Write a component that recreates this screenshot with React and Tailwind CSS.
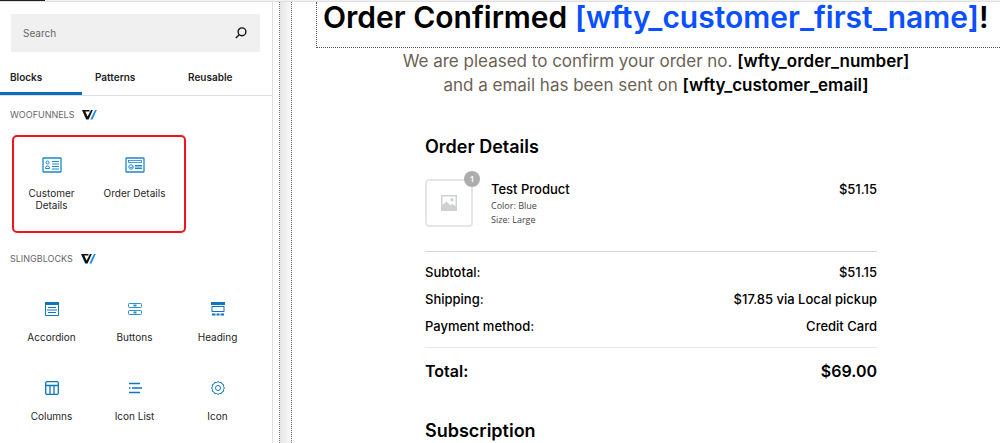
const woofunnelsBlocks = [
  { name: 'Customer Details', icon: CustomerIcon },
  { name: 'Order Details', icon: OrderIcon },
];

const slingBlocks = [
  { name: 'Accordion', icon: AccordionIcon },
  { name: 'Buttons', icon: ButtonsIcon },
  { name: 'Heading', icon: HeadingIcon },
  { name: 'Columns', icon: ColumnsIcon },
  { name: 'Icon List', icon: IconListIcon },
  { name: 'Icon', icon: GearIcon },
];

const totals = [
  { label: 'Subtotal:', value: '$51.15' },
  { label: 'Shipping:', value: '$17.85 via Local pickup' },
  { label: 'Payment method:', value: 'Credit Card' },
];

function CustomerIcon() {
  return (
    <svg width="20" height="16" viewBox="0 0 20 16" fill="none" stroke="#1c87c9">
      <rect x="1" y="1" width="18" height="14" rx="0.5" strokeWidth="1.3" />
      <circle cx="5.500" cy="5.500" r="1.500" />
      <path d="M3.500 11.500v-1q0-1.500 2-1.500t2 1.500v1z" />
      <path d="M10 4.500h7M10 7h7M10 9.500h7M10 12h7" />
    </svg>
  );
}

function OrderIcon() {
  return (
    <svg width="20" height="16" viewBox="0 0 20 16" fill="none" stroke="#1c87c9">
      <rect x="1" y="1" width="18" height="14" rx="0.5" strokeWidth="1.3" />
      <rect x="3.500" y="3.500" width="13" height="2" strokeWidth="0.8" />
      <circle cx="6" cy="10" r="2.200" />
      <path d="M5 10l1 1 2-2" strokeWidth="0.8" />
      <path d="M10 8.500h7M10 10h7M10 11.500h7" />
    </svg>
  );
}

function AccordionIcon() {
  return (
    <svg width="14" height="14" viewBox="0 0 14 14" fill="none" stroke="#0d76bd">
      <path d="M.5 1.500v12h13v-12" />
      <path d="M0 1.500h14" strokeWidth="3" />
      <path d="M3 5.500h8M2 8h10M3 10.500h8" strokeWidth="1.2" />
    </svg>
  );
}

function ButtonsIcon() {
  return (
    <svg width="14" height="14" viewBox="0 0 14 14" fill="none" stroke="#2e8fce">
      <rect x="0.5" y="1.500" width="13" height="4" rx="0.8" />
      <rect x="0.5" y="8.500" width="13" height="4" rx="0.8" />
      <path d="M5.500 3.500h3M5.500 10.500h3" strokeWidth="1.800" />
    </svg>
  );
}

function HeadingIcon() {
  return (
    <svg width="14" height="14" viewBox="0 0 14 14" fill="none" stroke="#0d76bd">
      <path d="M0 1.500h14" strokeWidth="3" />
      <rect x="1" y="4.500" width="12" height="5" strokeWidth="1" />
      <path d="M1 12.500h3.500M5.500 12.500h3M9.500 12.500h3.500" strokeWidth="2.200" />
    </svg>
  );
}

function ColumnsIcon() {
  return (
    <svg width="14" height="14" viewBox="0 0 14 14" fill="none" stroke="#0d76bd" strokeWidth="1.3">
      <rect x="0.7" y="0.7" width="12.600" height="12.600" rx="1.200" />
      <path d="M1 4.500h12M5 4.500v9M9 4.500v9" />
    </svg>
  );
}

function IconListIcon() {
  return (
    <svg width="14" height="14" viewBox="0 0 14 14" fill="none" stroke="#0d76bd" strokeWidth="1.500">
      <path d="M1 2.500h11M4 7h10M1 11.500h11M1 7h1.500" />
    </svg>
  );
}

function GearIcon() {
  return (
    <svg width="14" height="14" viewBox="0 0 14 14" fill="none" stroke="#0d76bd" strokeLinejoin="round">
      <path d="M5.500 1.500L7 .6l1.500.9 1.800-.2.700 1.700 1.700.7-.2 1.800.9 1.500-.9 1.500.2 1.800-1.700.7-.7 1.700-1.800-.2L7 13.400l-1.500-.9-1.800.2L3 11l-1.700-.7.2-1.800L.6 7l.9-1.500-.2-1.800L3 3l.7-1.700z" />
      <circle cx="7" cy="7" r="2.500" />
    </svg>
  );
}

function BrandMark() {
  return (
    <svg width="15" height="10" viewBox="0 0 15 10" aria-hidden="true">
      <path d="M0 0h7.500v1.500H3.300l2.300 5L9 0h1.800L6.600 9.500H4.200z" fill="#111" />
      <path d="M13 0h1.800l-4.300 9.500H8.300z" fill="#1a8cf0" />
    </svg>
  );
}

function SearchIcon() {
  return (
    <svg width="12" height="12" viewBox="0 0 12 12" fill="none" stroke="#111" strokeWidth="1.400">
      <circle cx="7" cy="4.800" r="3.900" />
      <path d="M4.200 7.800L.8 11" />
    </svg>
  );
}

function BlockButton({ block }) {
  const Icon = block.icon;
  return (
    <button type="button" className="flex h-[79px] flex-col items-center px-2 pt-5 text-[10px] leading-3 text-[#1e1e1e]">
      <span className="flex h-5 items-center">
        <Icon />
      </span>
      <span className="mt-3">{block.name}</span>
    </button>
  );
}

function CategoryTitle({ children }) {
  return (
    <h2 className="flex items-center gap-2 px-[10px] text-[9px] leading-4 text-[#666]">
      {children}
      <BrandMark />
    </h2>
  );
}

function Sidebar() {
  return (
    <aside className="w-[273px] shrink-0 border-r border-[#e0e0e0]">
      <div className="mr-3 ml-[11px] mt-3 flex h-[38px] items-center bg-[#f0f0f0] px-3">
        <input
          type="text"
          aria-label="Search"
          placeholder="Search"
          className="min-w-0 flex-1 bg-transparent text-[10px] outline-none placeholder:text-[#666]"
        />
        <button type="button" aria-label="Submit search" className="mr-px">
          <SearchIcon />
        </button>
      </div>

      <div role="tablist" className="mt-2 flex h-9 border-b border-[#ddd] text-[10px] font-semibold text-[#1e1e1e]">
        <button type="button" role="tab" aria-selected="true" className="w-[82px] border-b-3 border-[#0a6fba] pl-[10px] pt-[2px] text-left">
          Blocks
        </button>
        <button type="button" role="tab" aria-selected="false" className="w-[93px] pb-px pl-[13px] text-left">
          Patterns
        </button>
        <button type="button" role="tab" aria-selected="false" className="pb-px pl-[13px] text-left">
          Reusable
        </button>
      </div>

      <div className="mt-[11px]">
        <CategoryTitle>WOOFUNNELS</CategoryTitle>
      </div>
      <div className="relative mt-3 h-[98px] pr-[13px] pl-[10px]">
        <div className="grid grid-cols-3">
          {woofunnelsBlocks.map((block) => (
            <BlockButton key={block.name} block={block} />
          ))}
        </div>
        <div className="pointer-events-none absolute inset-y-0 left-3 w-[174px] rounded-[5px] border-2 border-[#f5121b]" />
      </div>

      <div className="mt-[18px]">
        <CategoryTitle>SLINGBLOCKS</CategoryTitle>
      </div>
      <div className="mt-3 grid grid-cols-3 pr-[13px] pl-[10px]">
        {slingBlocks.map((block) => (
          <BlockButton key={block.name} block={block} />
        ))}
      </div>
    </aside>
  );
}

function OrderSummary() {
  return (
    <section className="mx-auto mt-[38px] w-full max-w-[452px] text-black">
      <h2 className="text-lg leading-6 font-semibold">Order Details</h2>

      <div className="mt-5 flex items-start border-b border-[#d6d6d6] pb-6">
        <div className="relative flex size-12 shrink-0 items-center justify-center rounded border-2 border-[#e6e6e6]">
          <svg width="16" height="16" viewBox="0 0 16 16" aria-hidden="true">
            <path d="M0 0h16v16H0z" fill="#cfd0d3" />
            <path d="M1.500 1.500h13v10l-3-3-2 2-4-4-4 3.500z" fill="#fff" />
            <circle cx="11" cy="4.800" r="1.700" fill="#cfd0d3" />
          </svg>
          <span className="absolute -top-[10px] -right-[9px] flex size-4 items-center justify-center rounded-full bg-[#adadad] font-['Open_Sans',sans-serif] text-[9px] font-semibold text-white">
            1
          </span>
        </div>
        <div className="ml-[18px] flex-1">
          <p className="text-[13px] leading-5 font-medium">Test Product</p>
          <p className="font-['Open_Sans',sans-serif] text-[9px] leading-[14px] text-[#444]">Color: Blue</p>
          <p className="font-['Open_Sans',sans-serif] text-[9px] leading-[14px] text-[#444]">Size: Large</p>
        </div>
        <p className="text-[13px] leading-5 font-medium">$51.15</p>
      </div>

      <table className="mt-[7px] w-full text-[13px] font-medium">
        <tbody>
          {totals.map((row) => (
            <tr key={row.label} className="h-[27px]">
              <th scope="row" className="text-left font-medium">{row.label}</th>
              <td className="text-right">{row.value}</td>
            </tr>
          ))}
        </tbody>
        <tfoot>
          <tr>
            <td colSpan={2} className="h-[7px] border-b border-[#e8e8e8]" />
          </tr>
          <tr className="h-[48px] text-base font-semibold">
            <th scope="row" className="text-left font-semibold">Total:</th>
            <td className="text-right">$69.00</td>
          </tr>
        </tfoot>
      </table>

      <h2 className="mt-6 text-lg leading-6 font-semibold">Subscription</h2>
    </section>
  );
}

export default function App() {
  return (
    <div className="flex h-screen flex-col overflow-hidden bg-white font-['Inter',sans-serif]">
      <div className="flex h-[2px] shrink-0 border-b border-[#e0e0e0] bg-[#f0f0f0]">
        <div className="w-[45px] bg-[#1e1e1e]" />
      </div>
      <div className="flex min-h-0 flex-1">
        <Sidebar />
        <div className="ml-[6px] w-[13px] shrink-0 border-x border-dotted border-[#777] bg-linear-to-r from-[#e6e6e6] to-[#f8f8f8]" />
        <main className="min-w-0 flex-1 pl-6">
          <div className="h-[46px] border-b border-l border-dotted border-[#555]">
            <h1 className="pl-[6px] text-[30px] leading-[30px] font-semibold whitespace-nowrap text-black">
              Order Confirmed <span className="text-[#0a50ff]">[wfty_customer_first_name]</span>!
            </h1>
          </div>
          <p className="mt-px pr-1 text-center text-[17px] leading-6 text-[#6b6255]">
            We are pleased to confirm your order no. <b className="font-semibold text-black">[wfty_order_number]</b>
            <br />
            and a email has been sent on <b className="font-semibold text-black">[wfty_customer_email]</b>
          </p>
          <div className="pr-[14px]">
            <OrderSummary />
          </div>
        </main>
      </div>
    </div>
  );
}
